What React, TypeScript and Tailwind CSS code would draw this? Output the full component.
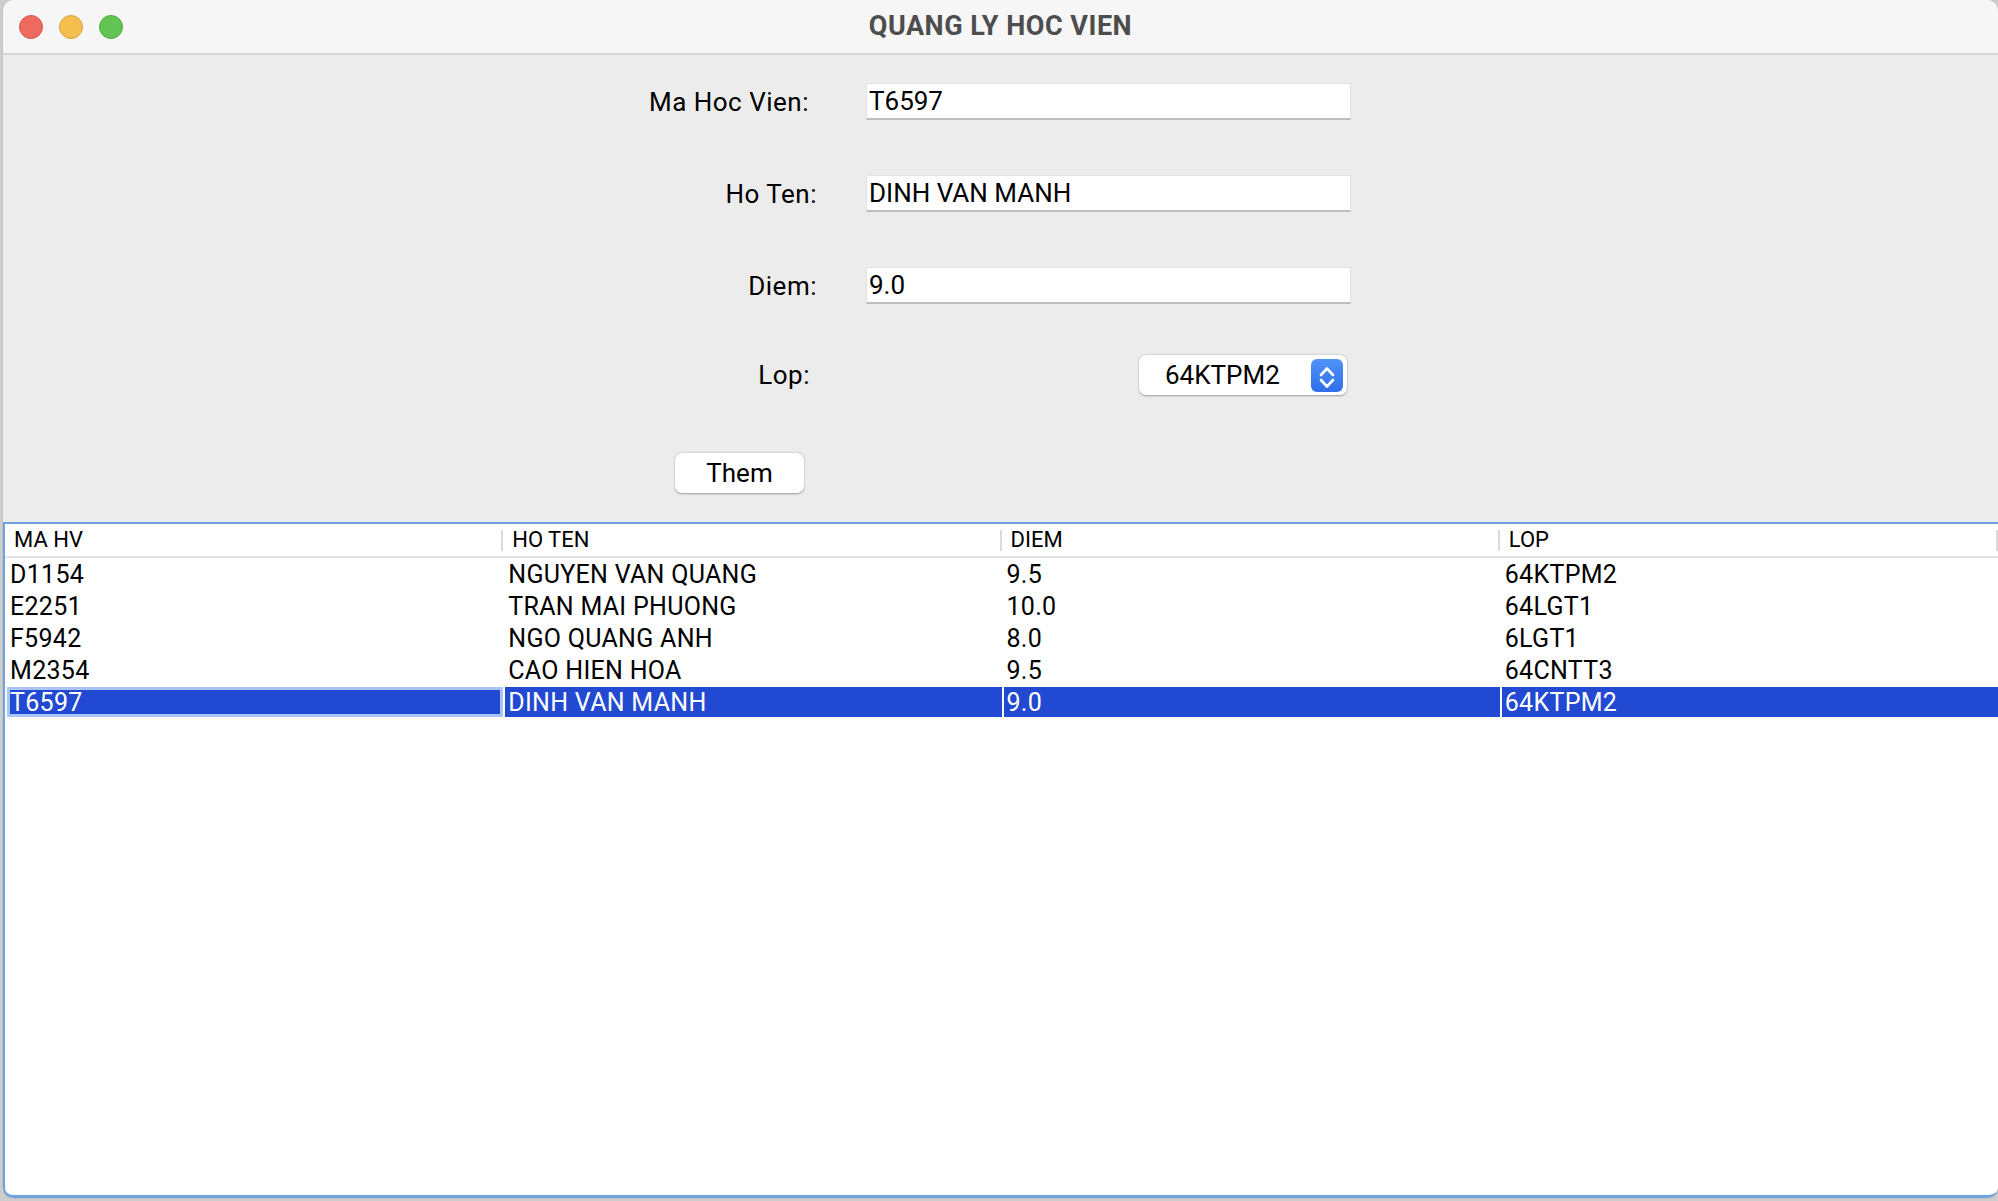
import { useState } from 'react';

const font = { fontFamily: 'Roboto, "Liberation Sans", sans-serif' };

const rows = [
  { ma: 'D1154', ten: 'NGUYEN VAN QUANG', diem: '9.5', lop: '64KTPM2' },
  { ma: 'E2251', ten: 'TRAN MAI PHUONG', diem: '10.0', lop: '64LGT1' },
  { ma: 'F5942', ten: 'NGO QUANG ANH', diem: '8.0', lop: '6LGT1' },
  { ma: 'M2354', ten: 'CAO HIEN HOA', diem: '9.5', lop: '64CNTT3' },
  { ma: 'T6597', ten: 'DINH VAN MANH', diem: '9.0', lop: '64KTPM2' },
];

const headers = ['MA HV', 'HO TEN', 'DIEM', 'LOP'];

function TextRow({ label, value, pr }: { label: string; value: string; pr: string }) {
  return (
    <div className="flex items-center h-[37px]">
      <div className={`w-[814px] text-right text-[26px] leading-none tracking-[0.5px] text-black ${pr}`}>{label}</div>
      <div className="ml-[49px] w-[485px] h-[37px] bg-white border border-[#e3e3e3] border-b-2 border-b-[#bdbdbd] flex items-center pl-[2px] text-[26px] leading-none text-black">
        {value}
      </div>
    </div>
  );
}

function Stepper() {
  return (
    <div className="w-[32px] h-[33px] rounded-[6px] bg-gradient-to-b from-[#4f93f8] to-[#2f6fe9] flex items-center justify-center">
      <svg width="32" height="33" viewBox="0 0 32 33" fill="none">
        <path d="M10 16 L16 9.5 L22 16" stroke="white" strokeWidth="2.6" strokeLinecap="round" strokeLinejoin="round" />
        <path d="M10 21 L16 27.5 L22 21" stroke="white" strokeWidth="2.6" strokeLinecap="round" strokeLinejoin="round" />
      </svg>
    </div>
  );
}

export default function App() {
  const [selected] = useState(4);

  return (
    <div className="w-[1998px] h-[1201px] bg-[#cdcdcd] overflow-hidden" style={font}>
      <div className="ml-[3px] w-[1995px] h-[1198px] rounded-[10px] overflow-hidden flex flex-col bg-[#ececec] shadow-[0_0_1px_rgba(0,0,0,0.5)]">
        {/* Title bar */}
        <div className="h-[55px] shrink-0 bg-[#f6f6f6] border-b-2 border-[#d4d4d4] grid grid-cols-[1fr_auto_1fr] items-center">
          <div className="flex items-center gap-[16px] pl-[16px]">
            <span className="w-[24px] h-[24px] rounded-full bg-[#ee6a5f] border border-[#d5574c]" />
            <span className="w-[24px] h-[24px] rounded-full bg-[#f5bf4f] border border-[#d6a243]" />
            <span className="w-[24px] h-[24px] rounded-full bg-[#61c554] border border-[#52a842]" />
          </div>
          <div className="text-[27px] font-bold tracking-[0.5px] text-[#4d4d4d]">QUANG LY HOC VIEN</div>
          <div />
        </div>

        {/* Form */}
        <div className="h-[467px] shrink-0 pt-[28px] flex flex-col">
          <TextRow label="Ma Hoc Vien:" value="T6597" pr="pr-[8px]" />
          <div className="mt-[55px]">
            <TextRow label="Ho Ten:" value="DINH VAN MANH" pr="pr-0" />
          </div>
          <div className="mt-[55px]">
            <TextRow label="Diem:" value="9.0" pr="pr-0" />
          </div>
          <div className="mt-[51px] flex items-center h-[40px]">
            <div className="w-[814px] text-right text-[26px] leading-none tracking-[0.5px] text-black pr-[7px]">Lop:</div>
            <div className="ml-[322px] w-[208px] h-[40px] bg-white rounded-[7px] shadow-[0_0.5px_2px_rgba(0,0,0,0.35)] flex items-center justify-between pl-[26px] pr-[4px]">
              <span className="text-[26px] leading-none text-black">64KTPM2</span>
              <Stepper />
            </div>
          </div>
          <div className="mt-[58px] flex">
            <button className="ml-[672px] w-[129px] h-[40px] bg-white rounded-[7px] shadow-[0_0.5px_2px_rgba(0,0,0,0.35)] text-[26px] leading-none text-black flex items-center justify-center">
              Them
            </button>
          </div>
        </div>

        {/* Table */}
        <div className="flex-1 bg-white border-t-2 border-l-2 border-b-[3px] border-[#6ea2e0] rounded-b-[10px] flex flex-col">
          <div className="h-[34px] shrink-0 grid grid-cols-4 border-b-2 border-[#e4e4e4]">
            {headers.map((h) => (
              <div key={h} className="flex items-center justify-between pl-[9px]">
                <span className="text-[22px] leading-none text-black">{h}</span>
                <span className="w-[2px] h-[21px] bg-[#dadada]" />
              </div>
            ))}
          </div>
          {rows.map((r, i) => {
            const sel = i === selected;
            const cells = [r.ma, r.ten, r.diem, r.lop];
            return (
              <div key={r.ma} className="h-[32px] shrink-0 grid grid-cols-4 grid-rows-[30px] gap-x-[2px] pl-[2px] py-[1px]">
                {cells.map((c, j) => (
                  <div
                    key={j}
                    className={`flex items-center text-[25px] leading-none tracking-[0.3px] ${
                      sel
                        ? j === 0
                          ? 'bg-[#2249d1] text-white border-x-[3px] border-y-[3px] border-[#aac5f5] pl-0'
                          : 'bg-[#2249d1] text-white pl-[3px]'
                        : 'text-black pl-[3px]'
                    }`}
                  >
                    {c}
                  </div>
                ))}
              </div>
            );
          })}
        </div>
      </div>
    </div>
  );
}
